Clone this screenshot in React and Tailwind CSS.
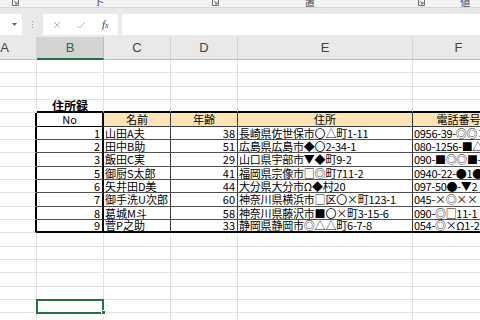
import React from 'react';

const jp = "font-['Noto_Sans_CJK_JP','Noto_Sans',sans-serif]";

const people = [
    { no: 1, name: '山田A夫', age: 38, addr: '長崎県佐世保市〇△町1-11', tel: '0956-39-◎◎××' },
    { no: 2, name: '田中B助', age: 51, addr: '広島県広島市◆〇2-34-1', tel: '080-1256-■△◎◎' },
    { no: 3, name: '飯田C実', age: 29, addr: '山口県宇部市▼◆町9-2', tel: '090-■◎◎■-1' },
    { no: 5, name: '御厨S太郎', age: 41, addr: '福岡県宗像市□◎町711-2', tel: '0940-22-●1●' },
    { no: 6, name: '矢井田D美', age: 44, addr: '大分県大分市Ω◆村20', tel: '097-50●-▼2' },
    { no: 7, name: '御手洗U次郎', age: 60, addr: '神奈川県横浜市□区〇×町123-1', tel: '045-×◎××' },
    { no: 8, name: '葛城M斗', age: 58, addr: '神奈川県藤沢市■〇×町3-15-6', tel: '090-◎□11-1' },
    { no: 9, name: '菅P之助', age: 33, addr: '静岡県静岡市◎△△町6-7-8', tel: '054-◎×Ω1-2' },
];

// column widths: A (partly scrolled off), B, C, D, E, F
const W = ['w-[64px]', 'w-[67px]', 'w-[67px]', 'w-[67px]', 'w-[175px]', 'w-[92px]'];

const Launcher = () => (
    <svg width="7" height="6" viewBox="0 0 7 6" className="shrink-0 mb-[1px]">
        <path d="M0.5 -1v6.5h6v-6.5" fill="none" stroke="#6f6f6f" strokeWidth="1" />
        <path d="M2 1l3 3M5 2v2h-2" fill="none" stroke="#6f6f6f" strokeWidth="1" />
    </svg>
);

const GridRow = ({ k, children }) => (
    <div className={`flex ${k % 3 === 1 ? 'h-[14px]' : 'h-[13px]'}`}>{children}</div>
);

const Blank = ({ i }) => (
    <div className={`${W[i]} shrink-0 border-r border-b border-[#e1e1e1]`} />
);

export default function App() {
    const rows = [];
    for (let k = 0; k < 20; k++) {
        if (k === 3) {
            rows.push(
                <GridRow k={k} key={k}>
                    <Blank i={0} />
                    <div className={`${W[1]} shrink-0 border-r border-[#e1e1e1] border-b-2 border-b-black flex items-center justify-center text-[12px] font-bold leading-none text-black ${jp}`}>
                        住所録
                    </div>
                    {[2, 3, 4, 5].map((i) => (
                        <div key={i} className={`${W[i]} shrink-0 border-r border-[#e1e1e1] border-b-2 border-b-black`} />
                    ))}
                </GridRow>
            );
        } else if (k === 4) {
            rows.push(
                <GridRow k={k} key={k}>
                    <div className={`${W[0]} shrink-0 border-b border-[#e1e1e1] border-r-2 border-r-black`} />
                    <div className={`${W[1]} shrink-0 bg-white border-r-2 border-b border-black flex items-center justify-center text-[11px] leading-none ${jp}`}>No</div>
                    {['名前', '年齢', '住所', '電話番号'].map((t, j) => (
                        <div key={t} className={`${W[j + 2]} shrink-0 bg-[#fce4b6] border-r border-b border-[#3a3a3a] flex items-center justify-center text-[11px] leading-none ${jp}`}>
                            {t}
                        </div>
                    ))}
                </GridRow>
            );
        } else if (k >= 5 && k <= 12) {
            const p = people[k - 5];
            const last = k === 12;
            const b = last ? 'border-b-2 border-b-black' : 'border-b border-b-[#505050]';
            rows.push(
                <GridRow k={k} key={k}>
                    <div className={`${W[0]} shrink-0 border-b border-[#e1e1e1] border-r-2 border-r-black`} />
                    <div className={`${W[1]} shrink-0 border-r-2 border-r-black ${b} flex items-center justify-end pr-[2px] text-[11px] leading-none text-black ${jp}`}>{p.no}</div>
                    <div className={`${W[2]} shrink-0 border-r border-r-[#3a3a3a] ${b} flex items-center pl-[1px] text-[11px] leading-none text-black whitespace-nowrap overflow-hidden ${jp}`}>{p.name}</div>
                    <div className={`${W[3]} shrink-0 border-r border-r-[#3a3a3a] ${b} flex items-center justify-end pr-[2px] text-[11px] leading-none text-black ${jp}`}>{p.age}</div>
                    <div className={`${W[4]} shrink-0 border-r border-r-[#3a3a3a] ${b} flex items-center pl-[1px] text-[11px] leading-none text-black whitespace-nowrap overflow-hidden tracking-[-0.2px] ${jp}`}>{p.addr}</div>
                    <div className={`${W[5]} shrink-0 ${b} flex items-center pl-[1px] text-[11px] leading-none text-black whitespace-nowrap overflow-hidden tracking-[-0.3px] ${jp}`}>{p.tel}</div>
                </GridRow>
            );
        } else {
            rows.push(
                <GridRow k={k} key={k}>
                    {W.map((_, i) =>
                        k === 18 && i === 1 ? (
                            <div key={i} className={`${W[1]} shrink-0 relative border-r border-b border-[#e1e1e1]`}>
                                <div className="absolute -left-[1px] -top-[1px] w-[68px] h-[15px] border-2 border-[#217346]" />
                                <div className="absolute -right-[3px] -bottom-[3px] w-[5px] h-[5px] bg-[#217346] border border-white" />
                            </div>
                        ) : (
                            <Blank key={i} i={i} />
                        )
                    )}
                </GridRow>
            );
        }
    }

    return (
        <div className="w-[480px] h-[320px] overflow-hidden bg-white font-['Liberation_Sans',sans-serif]">
            {/* ribbon group labels, cut off at the top */}
            <div className={`h-[8px] bg-[#f3f3f3] border-b border-[#d6d6d6] flex items-end overflow-hidden text-[10px] leading-none text-[#444] ${jp}`}>
                <div className="w-[12px]" />
                <Launcher />
                <div className="w-[76px]" />
                <span>フォント</span>
                <div className="w-[78px]" />
                <Launcher />
                <div className="w-[87px]" />
                <span>配置</span>
                <div className="w-[94px]" />
                <Launcher />
                <div className="w-[35px]" />
                <span>数値</span>
            </div>

            {/* formula bar */}
            <div className="bg-[#e9e9e9] pt-[6px] pb-[2px]">
                <div className="h-[21px] flex">
                    <div className="w-[22px] bg-white flex items-center justify-end pr-[5px]">
                        <svg width="5" height="3" viewBox="0 0 5 3"><path d="M0 0h5L2.5 3z" fill="#666" /></svg>
                    </div>
                    <div className="w-[21px] flex flex-col items-center justify-center gap-[2px]">
                        <span className="w-[1px] h-[1px] bg-[#9a9a9a]" />
                        <span className="w-[1px] h-[1px] bg-[#9a9a9a]" />
                        <span className="w-[1px] h-[1px] bg-[#9a9a9a]" />
                    </div>
                    <div className="w-[75px] bg-white flex items-center">
                        <svg width="8" height="8" viewBox="0 0 8 8" className="ml-[10px]">
                            <path d="M1 1l6 6M7 1l-6 6" stroke="#b5b5b5" strokeWidth="1" />
                        </svg>
                        <svg width="10" height="8" viewBox="0 0 10 8" className="ml-[15px]">
                            <path d="M1 4.5l2.5 2.5L9 1" stroke="#b5b5b5" strokeWidth="1" fill="none" />
                        </svg>
                        <span className="ml-[16px] font-['Liberation_Serif',serif] italic text-[11px] leading-none text-[#444]">
                            f<span className="text-[8px]">x</span>
                        </span>
                    </div>
                    <div className="w-[4px]" />
                    <div className="flex-1 bg-white" />
                </div>
            </div>

            <div className="-ml-[27px]">
                {/* column headers */}
                <div className="flex h-[23px] bg-[#e9e9e9] text-[13px] text-[#444]">
                    {['A', 'B', 'C', 'D', 'E', 'F'].map((c, i) => (
                        <div
                            key={c}
                            className={`${W[i]} shrink-0 flex items-center justify-center border-r ${
                                i === 1
                                    ? 'bg-[#d3d3d3] border-[#bdbdbd] border-b-2 border-b-[#217346] text-[#2f6b47]'
                                    : 'border-[#d4d4d4] border-b border-b-[#bdbdbd]'
                            }`}
                        >
                            {c}
                        </div>
                    ))}
                </div>
                {rows}
            </div>
        </div>
    );
}
